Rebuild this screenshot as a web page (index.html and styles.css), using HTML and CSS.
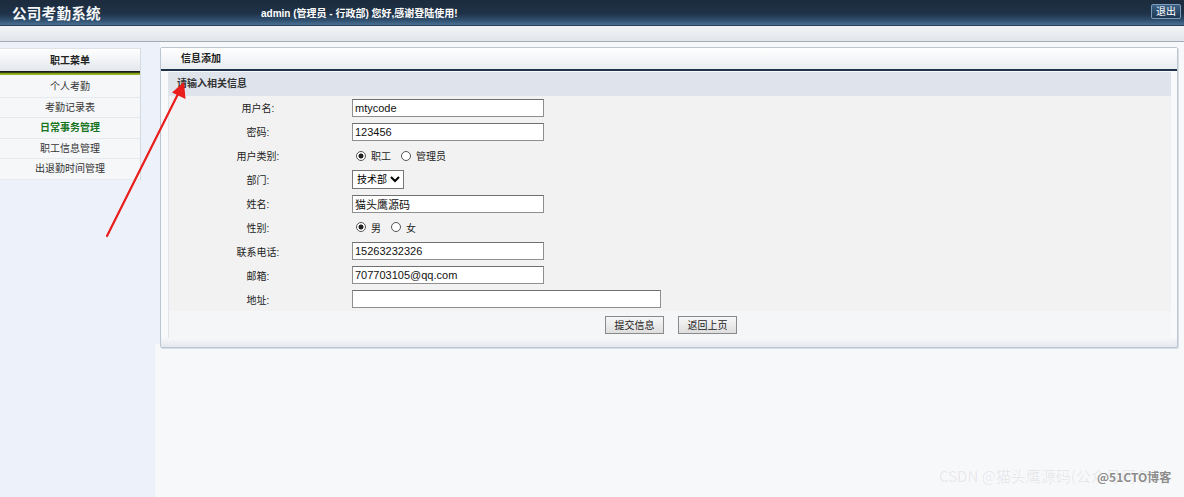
FILE: index.html
```html
<!DOCTYPE html>
<html lang="zh-CN">
<head>
    <meta charset="UTF-8">
    <title>公司考勤系统</title>
    <link rel="stylesheet" href="styles.css">
</head>
<body>
    <div class="topbar">
        <div class="logo">公司考勤系统</div>
        <div class="welcome">admin (管理员 - 行政部) 您好,感谢登陆使用!</div>
        <a href="#" class="exit-button">退出</a>
    </div>
    <div class="subbar"></div>

    <div class="layout">
        <!-- left menu -->
        <div class="sidebar">
            <div class="menu">
                <div class="menu-title">职工菜单</div>
                <div class="menu-bar"></div>
                <a href="#">个人考勤</a>
                <a href="#">考勤记录表</a>
                <a href="#" class="active">日常事务管理</a>
                <a href="#">职工信息管理</a>
                <a href="#">出退勤时间管理</a>
            </div>
        </div>

        <!-- main content -->
        <div class="main">
            <div class="panel">
                <div class="panel-title">信息添加</div>
                <div class="panel-body">
                    <div class="form-caption">请输入相关信息</div>
                    <form class="info-form">
                        <div class="form-row">
                            <label>用户名:</label>
                            <input type="text" class="text-input" value="mtycode">
                        </div>
                        <div class="form-row">
                            <label>密码:</label>
                            <input type="text" class="text-input" value="123456">
                        </div>
                        <div class="form-row">
                            <label>用户类别:</label>
                            <div class="radio-group">
                                <input type="radio" name="type" checked><span>职工</span>
                                <input type="radio" name="type"><span>管理员</span>
                            </div>
                        </div>
                        <div class="form-row">
                            <label>部门:</label>
                            <select class="dept-select">
                                <option>技术部</option>
                            </select>
                        </div>
                        <div class="form-row">
                            <label>姓名:</label>
                            <input type="text" class="text-input" value="猫头鹰源码">
                        </div>
                        <div class="form-row">
                            <label>性别:</label>
                            <div class="radio-group">
                                <input type="radio" name="sex" checked><span>男</span>
                                <input type="radio" name="sex"><span>女</span>
                            </div>
                        </div>
                        <div class="form-row">
                            <label>联系电话:</label>
                            <input type="text" class="text-input" value="15263232326">
                        </div>
                        <div class="form-row">
                            <label>邮箱:</label>
                            <input type="text" class="text-input" value="707703105@qq.com">
                        </div>
                        <div class="form-row">
                            <label>地址:</label>
                            <input type="text" class="text-input wide" value="">
                        </div>
                    </form>
                    <div class="actions">
                        <button type="button" class="btn">提交信息</button>
                        <button type="button" class="btn">返回上页</button>
                    </div>
                </div>
            </div>
        </div>
    </div>

    <!-- red annotation arrow -->
    <svg class="annotation" width="1184" height="497" viewBox="0 0 1184 497">
        <line x1="107" y1="236" x2="178" y2="94" stroke="#ea1c1c" stroke-width="2.2" stroke-linecap="round"/>
        <polygon points="184,82 185.5,99 172,92.5" fill="#ea1c1c"/>
    </svg>

    <div class="watermark">CSDN @猫头鹰源码(公众号同名)</div>
    <div class="watermark-tag">@51CTO博客</div>
</body>
</html>
```

FILE: styles.css
```css
/* General Styles */
body {
    margin: 0;
    padding: 0;
    height: 497px;
    display: flex;
    flex-direction: column;
    font-family: "Liberation Sans", "Noto Sans CJK SC", sans-serif;
    font-size: 10px;
    color: #222;
    background-color: #f7f8fa;
    overflow: hidden;
    position: relative;
}

/* Top Bar */
.topbar {
    height: 26px;
    display: flex;
    align-items: center;
    background: linear-gradient(to bottom, #1c2b3d 0%, #1f3248 55%, #2f4e6c 80%, #4a7195 100%);
    border-bottom: 1px solid #2a3f55;
    box-sizing: border-box;
}

.logo {
    margin-left: 12px;
    width: 249px;
    color: #f4f6f8;
    font-family: "Noto Sans CJK SC", sans-serif;
    font-size: 14.6px;
    font-weight: bold;
    letter-spacing: 0.2px;
}

.welcome {
    flex: 1;
    color: #ffffff;
    font-size: 10px;
    font-weight: bold;
}

.exit-button {
    margin-right: 3px;
    width: 30px;
    height: 15px;
    line-height: 13px;
    text-align: center;
    color: #ffffff;
    text-decoration: none;
    font-size: 10px;
    border: 1px solid #7b9bbb;
    border-radius: 2px;
    box-sizing: border-box;
    background: linear-gradient(to bottom, #3d6286, #1d3651);
    margin-top: -2px;
}

.subbar {
    height: 16px;
    background: linear-gradient(to bottom, #f3f4f7, #e2e5ea);
    border-bottom: 1px solid #a3adb9;
    box-sizing: border-box;
}

/* Layout */
.layout {
    flex: 1;
    display: flex;
}

.sidebar {
    width: 155px;
    background-color: #edf2fa;
    padding-top: 6px;
    box-sizing: border-box;
}

.menu {
    width: 140px;
    border-right: 1px solid #d5dbe3;
    background-color: #f4f6f9;
}

.menu-title {
    height: 23px;
    line-height: 23px;
    text-align: center;
    font-weight: bold;
    color: #222;
    background: linear-gradient(to bottom, #ffffff, #e3e7ec);
    border-top: 1px solid #dfe3e8;
    box-sizing: border-box;
}

.menu-bar {
    height: 4px;
    margin-bottom: 2px;
    background: linear-gradient(to bottom, #1a1a1a 0%, #1a1a1a 30%, #7c9a12 55%, #a6c230 100%);
}

.menu a {
    display: block;
    height: 20.5px;
    line-height: 20px;
    text-align: center;
    color: #333;
    text-decoration: none;
    border-bottom: 1px solid #e6e9ee;
    box-sizing: border-box;
    background-color: #f6f7f9;
}

.menu a.active {
    color: #17751d;
    font-weight: bold;
}

/* Main panel */
.main {
    flex: 1;
    padding: 5px 6px 0 5px;
    background: linear-gradient(to right, #edf2fa 0, #edf2fa 5px, transparent 5px);
    background-size: 100% 302px;
    background-repeat: no-repeat;
}

.panel {
    border: 1px solid #bcc6d2;
    border-radius: 2px;
    background-color: #f8f9fb;
    padding-bottom: 9px;
    box-shadow: 1px 1px 0 #d7dde5;
    background-image: linear-gradient(to bottom, transparent calc(100% - 10px), #e4e8ee 100%);
}

.panel-title {
    height: 21px;
    line-height: 22px;
    padding-left: 20px;
    font-weight: bold;
    color: #222;
    background: linear-gradient(to bottom, #ffffff, #e9ecf0);
    border-bottom: 2px solid #1f3247;
}

.panel-body {
    margin: 1px 6px 0 7px;
    border-left: 1px solid #e1e5ea;
}

.form-caption {
    height: 24px;
    line-height: 24px;
    padding-left: 8px;
    font-weight: bold;
    color: #333;
    background-color: #dfe4ec;
}

.info-form {
    margin: 0;
    background-color: #f2f2f2;
}

.form-row {
    height: 23.9px;
    display: flex;
    align-items: center;
}

.form-row label {
    width: 178px;
    text-align: center;
    color: #222;
    margin-right: 5px;
}

.text-input {
    width: 192px;
    height: 18px;
    padding: 0 2px;
    font-family: "Liberation Sans", "Noto Sans CJK SC", sans-serif;
    font-size: 11px;
    color: #111;
    border: 1px solid #8f8f8f;
    border-top-color: #707070;
    box-sizing: border-box;
    background-color: #ffffff;
}

.text-input.wide {
    width: 309px;
}

.dept-select {
    width: 52px;
    height: 19px;
    font-family: "Liberation Sans", "Noto Sans CJK SC", sans-serif;
    font-size: 10px;
    border: 1px solid #767676;
    padding: 0;
    background-color: #ffffff;
}

.radio-group {
    display: flex;
    align-items: center;
}

.radio-group input {
    appearance: none;
    width: 10px;
    height: 10px;
    margin: 0 5px 0 4px;
    border: 1px solid #555;
    border-radius: 50%;
    background-color: #ffffff;
    box-sizing: border-box;
}

.radio-group input:checked {
    background: radial-gradient(circle, #222 0, #222 2.2px, #ffffff 2.8px);
}

.radio-group span {
    margin-right: 6px;
}

.actions {
    height: 27px;
    display: flex;
    align-items: center;
    justify-content: center;
    gap: 14px;
    padding-left: 2px;
    background-color: #f5f6f8;
}

.btn {
    width: 59px;
    height: 18px;
    padding: 0;
    font-family: "Liberation Sans", "Noto Sans CJK SC", sans-serif;
    font-size: 10px;
    color: #222;
    border: 1px solid #8a8a8a;
    background: linear-gradient(to bottom, #f7f7f7, #dedede);
}

/* Overlays */
.annotation {
    position: absolute;
    top: 0;
    left: 0;
    pointer-events: none;
}

.watermark {
    position: absolute;
    left: 939px;
    top: 465px;
    font-family: "Noto Sans CJK SC", sans-serif;
    font-size: 15px;
    color: rgba(0, 0, 0, 0.08);
    white-space: nowrap;
}

.watermark-tag {
    position: absolute;
    left: 1097px;
    top: 468px;
    font-family: "Noto Sans CJK SC", sans-serif;
    font-size: 12px;
    font-weight: bold;
    color: #8c8c8c;
    text-shadow: 0 0 2px #ffffff, 0 0 2px #ffffff;
    white-space: nowrap;
}
```
